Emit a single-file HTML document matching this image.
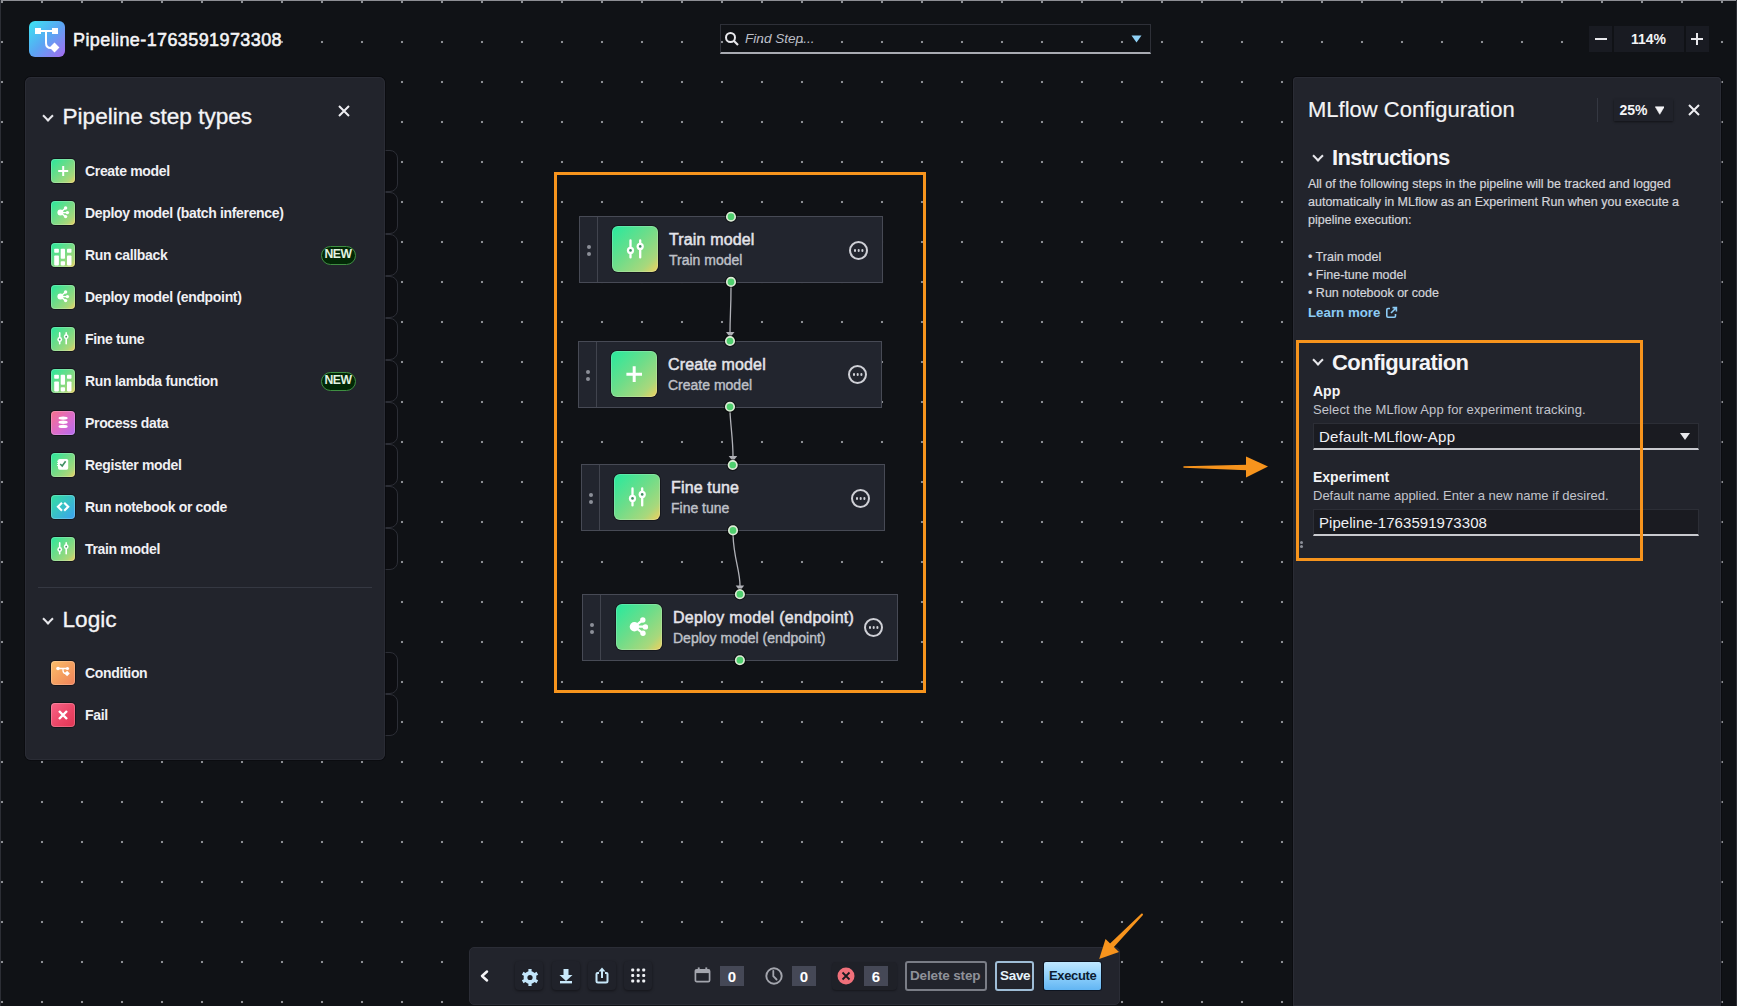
<!DOCTYPE html>
<html><head><meta charset="utf-8">
<style>
*{box-sizing:border-box;margin:0;padding:0}
html,body{width:1737px;height:1006px;overflow:hidden;background:#101216}
body{position:relative;font-family:"Liberation Sans",sans-serif;color:#e8e8ec}
.abs{position:absolute}
#canvas{position:absolute;left:0;top:0;width:1737px;height:1006px;background-color:#101216;
 background-image:radial-gradient(circle at 2px 2px,#8e9095 0.7px,rgba(142,144,149,0) 1.6px);background-size:40px 40px}
.edge-top{left:0;top:0;width:1737px;height:1px;background:#8d8e94}
.edge-left{left:0;top:0;width:1px;height:1006px;background:#2c2e35}
.edge-right{left:1736px;top:0;width:1px;height:1006px;background:#2c2e35}
.t{position:absolute;white-space:nowrap;line-height:1}
/* panels */
.panel{position:absolute;background:#22242c;border-radius:6px;box-shadow:inset 0 0 0 1px #2a2c35,0 0 0 1px rgba(5,6,10,.5)}
.chev{position:absolute;width:8px;height:8px;border-right:2px solid #e8e8ec;border-bottom:2px solid #e8e8ec;transform:rotate(45deg)}
.ico{position:absolute;width:24px;height:24px;box-shadow:0 0 0 1px rgba(0,0,0,.4),inset 0 0 0 1px rgba(255,255,255,.2);border-radius:4px;background:linear-gradient(135deg,#27e89d 0%,#6fdc88 45%,#a9d77a 80%,#efd05e 100%)}
.item{position:absolute;left:85px;font-size:14px;font-weight:700;letter-spacing:-0.33px;color:#f0f0f4}
.ghost{position:absolute;left:370px;width:28px;height:42px;border:1px solid #2c2e36;border-radius:8px;background:#0d0e12}
.badge{position:absolute;left:320.5px;width:35px;height:18.5px;border-radius:9.5px;background:#022806;border:1.8px solid #3f8f42;color:#e2f3e2;font-size:12.2px;font-weight:700;text-align:center;line-height:15.5px;letter-spacing:-0.4px}
/* nodes */
.node{position:absolute;background:#22252e;border:1.5px solid #474a55}
.node .hd{position:absolute;left:0;top:0;bottom:0;width:18px;border-right:1px solid #41444e}
.node .hd i{position:absolute;left:7px;width:4px;height:4px;border-radius:2px;background:#8c8f98}
.nico{position:absolute;width:46px;height:46px;border-radius:6px;box-shadow:0 0 0 1px rgba(0,0,0,.35),inset 0 0 0 1px rgba(255,255,255,.18);background:linear-gradient(135deg,#26ea9e 0%,#6cdd8a 45%,#a8d87c 80%,#f2d05c 100%)}
.ntitle{position:absolute;font-size:16px;font-weight:400;letter-spacing:0.15px;-webkit-text-stroke:0.5px #e4e4ea;color:#e4e4ea}
.nsub{position:absolute;font-size:14px;color:#bfc1c8;-webkit-text-stroke:0.4px #bfc1c8}
.ell{position:absolute;width:19px;height:19px;border:2px solid #cfd0d6;border-radius:50%}
.ell:after{content:"";position:absolute;left:2.6px;top:6.2px;width:2.6px;height:2.6px;border-radius:50%;background:#cfd0d6;box-shadow:3.7px 0 0 #cfd0d6,7.4px 0 0 #cfd0d6}
.cdot{position:absolute;width:11px;height:11px;border-radius:50%;background:#4fcf6e;border:1.7px solid #dcebd6;box-shadow:0 0 0 1px rgba(0,0,0,.35)}
.tbtn{position:absolute;top:961px;width:28px;height:29px;border-radius:4px;background:#20222a;box-shadow:0 1px 3px rgba(0,0,0,.45)}
.cnt{position:absolute;top:966px;width:24px;height:20px;background:#454856;color:#fff;font-size:15px;font-weight:700;text-align:center;line-height:21px}
.orange{position:absolute;border:3px solid #f7941d}
</style></head>
<body>
<div id="canvas"></div>
<div class="abs edge-top"></div>
<div class="abs edge-left"></div>
<div class="abs edge-right"></div>

<!-- header -->
<div class="abs" style="left:29px;top:21px;width:36px;height:36px;border-radius:6px;background:linear-gradient(135deg,#3ae6f2 0%,#5aa6f3 50%,#a76af0 100%)">
 <svg width="36" height="36" viewBox="0 0 36 36" style="position:absolute;left:0;top:0">
  <rect x="6" y="7" width="6" height="6" fill="#fff"/><rect x="23" y="7" width="6" height="6" fill="#fff"/>
  <path d="M12 10 H23 M17 10 V22 Q17 27 22 27" stroke="#fff" stroke-width="2" fill="none"/>
  <rect x="22" y="23" width="7" height="7" fill="#fff" transform="rotate(45 25.5 26.5)"/>
 </svg>
</div>
<div class="t" style="left:73px;top:31px;font-size:18px;font-weight:400;letter-spacing:0.4px;-webkit-text-stroke:0.55px #f4f4f6;color:#f4f4f6">Pipeline-1763591973308</div>

<!-- search -->
<div class="abs" style="left:720px;top:24px;width:431px;height:30px;border:1px solid #2e3038;border-bottom:2px solid #a9abb2"></div>
<svg class="abs" style="left:724px;top:31px" width="16" height="16" viewBox="0 0 16 16"><circle cx="6.5" cy="6.5" r="4.5" stroke="#e8e8ec" stroke-width="2" fill="none"/><path d="M10 10 L14 14" stroke="#e8e8ec" stroke-width="2.2"/></svg>
<div class="t" style="left:745px;top:32px;font-size:13.6px;font-style:italic;color:#bcbec5">Find Step...</div>
<svg class="abs" style="left:1131px;top:35px" width="11" height="8" viewBox="0 0 11 8"><path d="M0.5 0.5 H10.5 L5.5 7.5Z" fill="#8fd0f5"/></svg>

<!-- zoom -->
<div class="abs" style="left:1589px;top:26px;width:23px;height:26px;background:#191b22"></div>
<div class="abs" style="left:1614px;top:26px;width:70px;height:26px;background:#191b22"></div>
<div class="abs" style="left:1686px;top:26px;width:23px;height:26px;background:#191b22"></div>
<div class="abs" style="left:1595px;top:38px;width:12px;height:2px;background:#e8e8ec"></div>
<div class="abs" style="left:1691px;top:38px;width:12px;height:2px;background:#e8e8ec"></div>
<div class="abs" style="left:1696px;top:33px;width:2px;height:12px;background:#e8e8ec"></div>
<div class="t" style="left:1631px;top:32px;font-size:14px;font-weight:700;color:#f4f4f6">114%</div>

<!-- left panel -->
<div class="ghost" style="top:150px"></div>
<div class="ghost" style="top:192px"></div>
<div class="ghost" style="top:234px"></div>
<div class="ghost" style="top:276px"></div>
<div class="ghost" style="top:318px"></div>
<div class="ghost" style="top:360px"></div>
<div class="ghost" style="top:402px"></div>
<div class="ghost" style="top:444px"></div>
<div class="ghost" style="top:486px"></div>
<div class="ghost" style="top:528px"></div>
<div class="ghost" style="top:652px"></div>
<div class="ghost" style="top:694px"></div>
<div class="panel" style="left:25px;top:77px;width:360px;height:683px">
</div>
<div class="chev" style="left:44px;top:112px"></div>
<div class="t" style="left:62.5px;top:106px;font-size:22.6px;-webkit-text-stroke:0.3px #f4f4f6;color:#f4f4f6">Pipeline step types</div>
<svg class="abs" style="left:338px;top:105px" width="12" height="12" viewBox="0 0 12 12"><path d="M1 1 L11 11 M11 1 L1 11" stroke="#eeeef2" stroke-width="2"/></svg>

<div class="ico" style="left:51px;top:159px"><svg width="24" height="24" viewBox="0 0 24 24"><path d="M12.2 7v10M7.2 12h10" stroke="#fff" stroke-width="2"/></svg></div>
<div class="t item" style="top:164px">Create model</div>
<div class="ico" style="left:51px;top:201px"><svg width="24" height="24" viewBox="0 0 24 24"><path d="M9.4 11.6 L14.6 7 M9.4 11.6 H16.4 M9.4 11.6 L14.6 15.6" stroke="#fff" stroke-width="1.4"/><g fill="#fff"><circle cx="9.4" cy="11.6" r="3"/><circle cx="14.6" cy="7" r="1.7"/><circle cx="16.4" cy="11.6" r="1.7"/><circle cx="14.6" cy="15.6" r="1.7"/></g></svg></div>
<div class="t item" style="top:206px">Deploy model (batch inference)</div>
<div class="ico" style="left:51px;top:243px"><svg width="24" height="24" viewBox="0 0 24 24" fill="#fff"><rect x="3.2" y="5.7" width="4.7" height="4" rx=".8"/><rect x="3.2" y="12.4" width="4.7" height="10" rx=".8"/><rect x="9.7" y="5.7" width="4.3" height="10.1" rx=".8"/><rect x="9.7" y="18.3" width="4.3" height="4.1" rx=".8"/><rect x="16" y="5.7" width="4.5" height="4" rx=".8"/><rect x="16" y="12.4" width="4.5" height="10" rx=".8"/></svg></div>
<div class="t item" style="top:248px">Run callback</div>
<div class="badge" style="top:246px">NEW</div>
<div class="ico" style="left:51px;top:285px"><svg width="24" height="24" viewBox="0 0 24 24"><path d="M9.4 11.6 L14.6 7 M9.4 11.6 H16.4 M9.4 11.6 L14.6 15.6" stroke="#fff" stroke-width="1.4"/><g fill="#fff"><circle cx="9.4" cy="11.6" r="3"/><circle cx="14.6" cy="7" r="1.7"/><circle cx="16.4" cy="11.6" r="1.7"/><circle cx="14.6" cy="15.6" r="1.7"/></g></svg></div>
<div class="t item" style="top:290px">Deploy model (endpoint)</div>
<div class="ico" style="left:51px;top:327px"><svg width="24" height="24" viewBox="0 0 24 24"><path d="M8.7 5.9V16.7M15.2 5.9V16.7" stroke="#fff" stroke-width="1.6" stroke-linecap="round"/><circle cx="8.7" cy="12.5" r="2.4" fill="#fff"/><circle cx="15.2" cy="9.7" r="2.4" fill="#fff"/><circle cx="8.7" cy="12.5" r=".9" fill="#3f8f62"/><circle cx="15.2" cy="9.7" r=".9" fill="#3f8f62"/></svg></div>
<div class="t item" style="top:332px">Fine tune</div>
<div class="ico" style="left:51px;top:369px"><svg width="24" height="24" viewBox="0 0 24 24" fill="#fff"><rect x="3.2" y="5.7" width="4.7" height="4" rx=".8"/><rect x="3.2" y="12.4" width="4.7" height="10" rx=".8"/><rect x="9.7" y="5.7" width="4.3" height="10.1" rx=".8"/><rect x="9.7" y="18.3" width="4.3" height="4.1" rx=".8"/><rect x="16" y="5.7" width="4.5" height="4" rx=".8"/><rect x="16" y="12.4" width="4.5" height="10" rx=".8"/></svg></div>
<div class="t item" style="top:374px">Run lambda function</div>
<div class="badge" style="top:372px">NEW</div>
<div class="ico" style="left:51px;top:411px;background:linear-gradient(135deg,#f9708a 0%,#d86bd0 60%,#b26bf0 100%)"><svg width="24" height="24" viewBox="0 0 24 24" fill="#fff"><ellipse cx="12.1" cy="7.1" rx="4.6" ry="1.7"/><ellipse cx="12.1" cy="11.3" rx="4.6" ry="1.7"/><ellipse cx="12.1" cy="15.4" rx="4.6" ry="1.7"/></svg></div>
<div class="t item" style="top:416px">Process data</div>
<div class="ico" style="left:51px;top:453px"><svg width="24" height="24" viewBox="0 0 24 24"><rect x="7" y="5.9" width="10.2" height="10.8" rx="1.6" fill="#fff"/><path d="M6 8.2h2M6 10.4h2M6 12.6h2" stroke="#fff" stroke-width="1"/><path d="M9.2 11 L11.2 13 L14.6 8.2" stroke="#3f8f62" stroke-width="1.6" fill="none"/></svg></div>
<div class="t item" style="top:458px">Register model</div>
<div class="ico" style="left:51px;top:495px;background:linear-gradient(135deg,#33e0a0 0%,#39c0c8 50%,#3b9ff0 100%)"><svg width="24" height="24" viewBox="0 0 24 24"><path d="M11 7.8 L7 11.8 L11 15.7 M13.2 7.8 L17.2 11.8 L13.2 15.7" stroke="#fff" stroke-width="2.2" fill="none"/></svg></div>
<div class="t item" style="top:500px">Run notebook or code</div>
<div class="ico" style="left:51px;top:537px"><svg width="24" height="24" viewBox="0 0 24 24"><path d="M8.7 5.9V16.7M15.2 5.9V16.7" stroke="#fff" stroke-width="1.6" stroke-linecap="round"/><circle cx="8.7" cy="12.5" r="2.4" fill="#fff"/><circle cx="15.2" cy="9.7" r="2.4" fill="#fff"/><circle cx="8.7" cy="12.5" r=".9" fill="#3f8f62"/><circle cx="15.2" cy="9.7" r=".9" fill="#3f8f62"/></svg></div>
<div class="t item" style="top:542px">Train model</div>

<div class="abs" style="left:38px;top:587px;width:334px;height:1px;background:#353842"></div>
<div class="chev" style="left:44px;top:614.5px"></div>
<div class="t" style="left:62.5px;top:608.5px;font-size:22.6px;-webkit-text-stroke:0.3px #f4f4f6;color:#f4f4f6">Logic</div>
<div class="ico" style="left:51px;top:661px;background:linear-gradient(135deg,#fbbf6a 0%,#f39a5e 60%,#f0805a 100%)"><svg width="24" height="24" viewBox="0 0 24 24"><path d="M7 7.5 H16.5 M12 7.5 V9.5 Q12 12.5 15 12.5" stroke="#fff" stroke-width="1.3" fill="none"/><circle cx="7" cy="7.5" r="1.8" fill="#fff"/><circle cx="16.5" cy="7.5" r="1.6" fill="#fff"/><rect x="14.2" y="10.6" width="3.8" height="3.8" fill="#fff" transform="rotate(45 16.1 12.5)"/></svg></div>
<div class="t item" style="top:666px">Condition</div>
<div class="ico" style="left:51px;top:703px;background:linear-gradient(135deg,#f86487 0%,#ea4465 60%,#e03553 100%)"><svg width="24" height="24" viewBox="0 0 24 24"><path d="M8 8 L16 16 M16 8 L8 16" stroke="#fff" stroke-width="2.4"/></svg></div>
<div class="t item" style="top:708px">Fail</div>

<!-- pipeline -->
<div class="orange" style="left:554px;top:172px;width:372px;height:521px"></div>

<div class="node" style="left:579px;top:216px;width:304px;height:67px"><div class="hd"><i style="top:28px"></i><i style="top:35px"></i></div></div>
<div class="nico" style="left:612px;top:226px"><svg width="46" height="46" viewBox="0 0 46 46"><path d="M18.5 14.5V31.4M28.2 14.5V31.4" stroke="#fff" stroke-width="2.3" stroke-linecap="round"/><circle cx="18.5" cy="24.4" r="3.6" fill="#fff"/><circle cx="28.2" cy="20.4" r="3.6" fill="#fff"/><circle cx="18.5" cy="24.4" r="1.3" fill="#3f8f62"/><circle cx="28.2" cy="20.4" r="1.3" fill="#3f8f62"/></svg></div>
<div class="t ntitle" style="left:669px;top:232px">Train model</div>
<div class="t nsub" style="left:669px;top:253px">Train model</div>
<div class="ell" style="left:849px;top:241px"></div>

<div class="node" style="left:578px;top:341px;width:304px;height:67px"><div class="hd"><i style="top:28px"></i><i style="top:35px"></i></div></div>
<div class="nico" style="left:611px;top:351px"><svg width="46" height="46" viewBox="0 0 46 46"><path d="M23.2 15.3V31M15.4 23.2H31" stroke="#fff" stroke-width="3"/></svg></div>
<div class="t ntitle" style="left:668px;top:357px">Create model</div>
<div class="t nsub" style="left:668px;top:378px">Create model</div>
<div class="ell" style="left:848px;top:365px"></div>

<div class="node" style="left:581px;top:464px;width:304px;height:67px"><div class="hd"><i style="top:28px"></i><i style="top:35px"></i></div></div>
<div class="nico" style="left:614px;top:474px"><svg width="46" height="46" viewBox="0 0 46 46"><path d="M18.5 14.5V31.4M28.2 14.5V31.4" stroke="#fff" stroke-width="2.3" stroke-linecap="round"/><circle cx="18.5" cy="24.4" r="3.6" fill="#fff"/><circle cx="28.2" cy="20.4" r="3.6" fill="#fff"/><circle cx="18.5" cy="24.4" r="1.3" fill="#3f8f62"/><circle cx="28.2" cy="20.4" r="1.3" fill="#3f8f62"/></svg></div>
<div class="t ntitle" style="left:671px;top:480px">Fine tune</div>
<div class="t nsub" style="left:671px;top:501px">Fine tune</div>
<div class="ell" style="left:851px;top:489px"></div>

<div class="node" style="left:582px;top:594px;width:316px;height:67px"><div class="hd"><i style="top:28px"></i><i style="top:35px"></i></div></div>
<div class="nico" style="left:616px;top:604px"><svg width="46" height="46" viewBox="0 0 46 46"><path d="M18.4 22.7 L26.8 16 M18.4 22.7 H29.4 M18.4 22.7 L27 29.3" stroke="#fff" stroke-width="2.3"/><g fill="#fff"><circle cx="18.4" cy="22.7" r="4.7"/><circle cx="26.8" cy="16" r="2.7"/><circle cx="29.4" cy="22.9" r="2.7"/><circle cx="27" cy="29.3" r="2.7"/></g></svg></div>
<div class="t ntitle" style="left:673px;top:610px;letter-spacing:0.3px">Deploy model (endpoint)</div>
<div class="t nsub" style="left:673px;top:631px">Deploy model (endpoint)</div>
<div class="ell" style="left:864px;top:618px"></div>

<svg class="abs" style="left:0;top:0" width="1737" height="1006">
 <g stroke="#b0b1b7" stroke-width="1.3" fill="none">
  <path d="M731 287 C731 310 730 315 730 333"/>
  <path d="M730 412 C731 430 733 440 733 457"/>
  <path d="M733 535 C734 560 740 570 740 586"/>
 </g>
 <g fill="#b0b1b7">
  <path d="M726 332 H734.5 L730.2 337.5Z"/>
  <path d="M728.7 456 H737.2 L732.9 461.5Z"/>
  <path d="M735.7 585.5 H744.2 L739.9 591Z"/>
 </g>
 <circle cx="731" cy="216.7" r="5.6" fill="none" stroke="rgba(0,0,0,.45)" stroke-width="1.2"/><circle cx="731" cy="216.7" r="4.2" fill="#4fcf6e" stroke="#dcebd6" stroke-width="1.7"/>
 <circle cx="731" cy="281.9" r="5.6" fill="none" stroke="rgba(0,0,0,.45)" stroke-width="1.2"/><circle cx="731" cy="281.9" r="4.2" fill="#4fcf6e" stroke="#dcebd6" stroke-width="1.7"/>
 <circle cx="730" cy="341" r="5.6" fill="none" stroke="rgba(0,0,0,.45)" stroke-width="1.2"/><circle cx="730" cy="341" r="4.2" fill="#4fcf6e" stroke="#dcebd6" stroke-width="1.7"/>
 <circle cx="730" cy="406.8" r="5.6" fill="none" stroke="rgba(0,0,0,.45)" stroke-width="1.2"/><circle cx="730" cy="406.8" r="4.2" fill="#4fcf6e" stroke="#dcebd6" stroke-width="1.7"/>
 <circle cx="732.7" cy="465" r="5.6" fill="none" stroke="rgba(0,0,0,.45)" stroke-width="1.2"/><circle cx="732.7" cy="465" r="4.2" fill="#4fcf6e" stroke="#dcebd6" stroke-width="1.7"/>
 <circle cx="733" cy="530.4" r="5.6" fill="none" stroke="rgba(0,0,0,.45)" stroke-width="1.2"/><circle cx="733" cy="530.4" r="4.2" fill="#4fcf6e" stroke="#dcebd6" stroke-width="1.7"/>
 <circle cx="739.9" cy="594.2" r="5.6" fill="none" stroke="rgba(0,0,0,.45)" stroke-width="1.2"/><circle cx="739.9" cy="594.2" r="4.2" fill="#4fcf6e" stroke="#dcebd6" stroke-width="1.7"/>
 <circle cx="739.9" cy="660.2" r="5.6" fill="none" stroke="rgba(0,0,0,.45)" stroke-width="1.2"/><circle cx="739.9" cy="660.2" r="4.2" fill="#4fcf6e" stroke="#dcebd6" stroke-width="1.7"/>
</svg>

<!-- right panel -->
<div class="panel" style="left:1293px;top:77px;width:428px;height:929px;border-radius:4px 4px 0 0"></div>
<div class="t" style="left:1308px;top:98.5px;font-size:22px;-webkit-text-stroke:0.2px #f4f4f6;color:#f4f4f6">MLflow Configuration</div>
<div class="abs" style="left:1597px;top:98px;width:1px;height:24px;background:#353842"></div>
<div class="abs" style="left:1614px;top:99px;width:59px;height:22px;background:#20222a;box-shadow:0 1px 2px rgba(0,0,0,.5)"></div>
<div class="t" style="left:1619.5px;top:103px;font-size:14px;font-weight:700;color:#f4f4f6">25%</div>
<svg class="abs" style="left:1654.5px;top:105.5px" width="9.5" height="9" viewBox="0 0 9.5 9"><path d="M0.3 0.8 H9.2 L4.75 8.3Z" fill="#f4f4f6" stroke="#f4f4f6" stroke-width="0.6" stroke-linejoin="round"/></svg>
<svg class="abs" style="left:1688px;top:104px" width="12" height="12" viewBox="0 0 12 12"><path d="M1 1 L11 11 M11 1 L1 11" stroke="#eeeef2" stroke-width="2"/></svg>

<div class="chev" style="left:1314px;top:152px"></div>
<div class="t" style="left:1332px;top:147px;font-size:22px;font-weight:700;letter-spacing:-0.7px;color:#f4f4f6">Instructions</div>
<div class="t" style="left:1308px;top:174.5px;font-size:12.5px;-webkit-text-stroke:0.2px #d4d5db;color:#d4d5db;line-height:18px;white-space:normal;width:400px">All of the following steps in the pipeline will be tracked and logged<br>automatically in MLflow as an Experiment Run when you execute a<br>pipeline execution:</div>
<div class="t" style="left:1308px;top:248px;font-size:12.5px;-webkit-text-stroke:0.2px #d4d5db;color:#d4d5db;line-height:18px;white-space:normal;width:400px">&bull; Train model<br>&bull; Fine-tune model<br>&bull; Run notebook or code</div>
<div class="t" style="left:1308px;top:306px;font-size:13.3px;font-weight:700;color:#8ccbf5">Learn more</div>
<svg class="abs" style="left:1385px;top:306px" width="13" height="13" viewBox="0 0 13 13"><path d="M5 2.5 H3 Q1.8 2.5 1.8 3.7 V10 Q1.8 11.2 3 11.2 H9.3 Q10.5 11.2 10.5 10 V8" stroke="#8ccbf5" stroke-width="1.6" fill="none"/><path d="M6 7 L11 2 M7.5 1.6 H11.4 V5.5" stroke="#8ccbf5" stroke-width="1.6" fill="none"/></svg>

<div class="chev" style="left:1314px;top:356px"></div>
<div class="t" style="left:1332px;top:351.5px;font-size:22px;font-weight:700;letter-spacing:-0.6px;color:#f4f4f6">Configuration</div>
<div class="t" style="left:1313px;top:384px;font-size:14px;font-weight:700;color:#f4f4f6">App</div>
<div class="t" style="left:1313px;top:403px;font-size:13px;letter-spacing:0.1px;color:#c3c5cc">Select the MLflow App for experiment tracking.</div>
<div class="abs" style="left:1313px;top:423px;width:386px;height:27px;background:#1a1b21;border:1px solid #2c2e36;border-bottom:2px solid #c9cacf"></div>
<div class="t" style="left:1319px;top:429px;font-size:15px;letter-spacing:0.25px;color:#f0f0f4">Default-MLflow-App</div>
<svg class="abs" style="left:1680px;top:433px" width="10" height="7" viewBox="0 0 10 7"><path d="M0 0 H10 L5 7Z" fill="#e8e8ec"/></svg>
<div class="t" style="left:1313px;top:470px;font-size:14px;font-weight:700;color:#f4f4f6">Experiment</div>
<div class="t" style="left:1313px;top:489px;font-size:13px;color:#c3c5cc">Default name applied. Enter a new name if desired.</div>
<div class="abs" style="left:1313px;top:509px;width:386px;height:27px;background:#1a1b21;border:1px solid #2c2e36;border-bottom:2px solid #c9cacf"></div>
<div class="t" style="left:1319px;top:515px;font-size:15px;letter-spacing:0.05px;color:#f0f0f4">Pipeline-1763591973308</div>

<div class="orange" style="left:1296px;top:340px;width:347px;height:221px"></div>
<div class="abs" style="left:1300px;top:541px;width:3px;height:3px;border-radius:50%;background:#8c8f98;box-shadow:0 4px 0 #8c8f98"></div>
<!-- orange arrows -->
<svg class="abs" style="left:0;top:0" width="1737" height="1006">
 <path d="M1184 467 L1247 465.5 L1247 469.5Z" fill="#f7941d" stroke="#f7941d" stroke-width="1.5" stroke-linejoin="round"/>
 <path d="M1246 456.5 L1268 466.6 L1246 477.5Z" fill="#f7941d"/>
</svg>

<!-- toolbar -->
<div class="abs" style="left:469px;top:947px;width:651px;height:58px;background:#22242c;border:1px solid #2b2d36;border-radius:5px"></div>
<svg class="abs" style="left:478px;top:968px" width="12" height="16" viewBox="0 0 12 16"><path d="M9 3.5 L4 8 L9 12.5" stroke="#f4f4f6" stroke-width="2.5" fill="none" stroke-linecap="round" stroke-linejoin="round"/></svg>
<div class="tbtn" style="left:515px"></div>
<div class="tbtn" style="left:552px"></div>
<div class="tbtn" style="left:588px"></div>
<div class="tbtn" style="left:624px"></div>
<svg class="abs" style="left:520px;top:967px" width="20" height="20" viewBox="0 0 20 20">
 <g fill="#c3e6fb">
  <path d="M12.81 4.75 L11.55 4.29 L11.64 2.06 L8.36 2.06 L8.45 4.29 L6.42 5.19 L5.40 6.05 L3.51 4.86 L1.87 7.70 L3.85 8.74 L3.62 10.95 L3.85 12.26 L1.87 13.30 L3.51 16.14 L5.40 14.95 L7.19 16.25 L8.45 16.71 L8.36 18.94 L11.64 18.94 L11.55 16.71 L13.58 15.81 L14.60 14.95 L16.49 16.14 L18.13 13.30 L16.15 12.26 L16.38 10.05 L16.15 8.74 L18.13 7.70 L16.49 4.86 L14.60 6.05Z"/>
 </g>
 <circle cx="10" cy="10.5" r="2.6" fill="#1e2027"/>
</svg>
<svg class="abs" style="left:557px;top:966px" width="18" height="20" viewBox="0 0 18 20">
 <path d="M6.5 3 H11.5 V9 H15.5 L9 15 L2.5 9 H6.5Z" fill="#c8e8fa"/>
 <rect x="3" y="15" width="12" height="2.4" fill="#c8e8fa"/>
</svg>
<svg class="abs" style="left:593px;top:965px" width="18" height="20" viewBox="0 0 18 20">
 <path d="M6 8 H4.5 Q3.5 8 3.5 9 V16 Q3.5 17.5 5 17.5 H13 Q14.5 17.5 14.5 16 V9 Q14.5 8 13.5 8 H12" stroke="#c8e8fa" stroke-width="2" fill="none"/>
 <path d="M9 13 V5" stroke="#c8e8fa" stroke-width="2"/>
 <path d="M5.5 6.5 L9 2.5 L12.5 6.5Z" fill="#c8e8fa"/>
</svg>
<svg class="abs" style="left:629px;top:967px" width="18" height="18" viewBox="0 0 18 18" fill="#eef0f4">
 <rect x="2.2" y="1.5" width="3" height="3" rx="1"/><rect x="7.7" y="1.5" width="3" height="3" rx="1"/><rect x="13.2" y="1.5" width="3" height="3" rx="1"/>
 <rect x="2.2" y="7" width="3" height="3" rx="1"/><rect x="7.7" y="7" width="3" height="3" rx="1"/><rect x="13.2" y="7" width="3" height="3" rx="1"/>
 <rect x="2.2" y="12.5" width="3" height="3" rx="1"/><rect x="7.7" y="12.5" width="3" height="3" rx="1"/><rect x="13.2" y="12.5" width="3" height="3" rx="1"/>
</svg>
<svg class="abs" style="left:693.5px;top:966px" width="17" height="17" viewBox="0 0 18 18">
 <path d="M3 4 H15 Q16.5 4 16.5 5.5 V15 Q16.5 16.5 15 16.5 H3 Q1.5 16.5 1.5 15 V5.5 Q1.5 4 3 4Z" stroke="#a3a5ad" stroke-width="1.8" fill="none"/>
 <rect x="1.5" y="4" width="15" height="3.5" fill="#a3a5ad"/>
 <rect x="4" y="1.5" width="2" height="3" fill="#a3a5ad"/><rect x="12" y="1.5" width="2" height="3" fill="#a3a5ad"/>
</svg>
<div class="cnt" style="left:720px">0</div>
<svg class="abs" style="left:764px;top:966px" width="20" height="20" viewBox="0 0 20 20">
 <circle cx="10" cy="10" r="7.7" stroke="#a3a5ad" stroke-width="1.9" fill="none"/>
 <path d="M9.3 4.8 V10.2 L12.6 13.5" stroke="#a3a5ad" stroke-width="1.8" fill="none" stroke-linecap="round"/>
</svg>
<div class="cnt" style="left:792px">0</div>
<div class="abs" style="left:832px;top:962px;width:65px;height:28px;border-radius:4px;background:#1f2128;box-shadow:0 1px 2px rgba(0,0,0,.35)"></div>
<svg class="abs" style="left:837px;top:967px" width="18" height="18" viewBox="0 0 18 18">
 <circle cx="9" cy="9" r="8.5" fill="#f0707a"/>
 <path d="M5.5 5.5 L12.5 12.5 M12.5 5.5 L5.5 12.5" stroke="#1a1b20" stroke-width="1.8"/>
</svg>
<div class="cnt" style="left:864px">6</div>
<div class="abs" style="left:905px;top:961px;width:82px;height:30px;border:2px solid #7a7d86;border-radius:3px"></div>
<div class="t" style="left:910px;top:969px;font-size:13.5px;font-weight:700;letter-spacing:-0.15px;color:#8f9199">Delete step</div>
<div class="abs" style="left:995px;top:961px;width:39px;height:30px;border:2px solid #9fbdd6;border-radius:3px"></div>
<div class="t" style="left:1000px;top:969px;font-size:13.5px;font-weight:700;letter-spacing:-0.3px;color:#e6f3fb">Save</div>
<div class="abs" style="left:1044px;top:962px;width:57px;height:28px;border-radius:2px;background:linear-gradient(180deg,#bfe7ff 0%,#8fd0fb 50%,#62b5f3 100%);box-shadow:0 0 0 1px #0d1420"></div>
<div class="t" style="left:1049px;top:969px;font-size:13px;font-weight:700;letter-spacing:-0.35px;color:#0d1c31">Execute</div>
<svg class="abs" style="left:0;top:0" width="1737" height="1006">
 <path d="M1142 914.5 L1110.5 944.5 L1112.5 947 Z" fill="#f7941d" stroke="#f7941d" stroke-width="2" stroke-linejoin="round"/>
 <path d="M1099.2 959 L1105.5 939 L1119 952Z" fill="#f7941d"/>
</svg>
</body></html>
